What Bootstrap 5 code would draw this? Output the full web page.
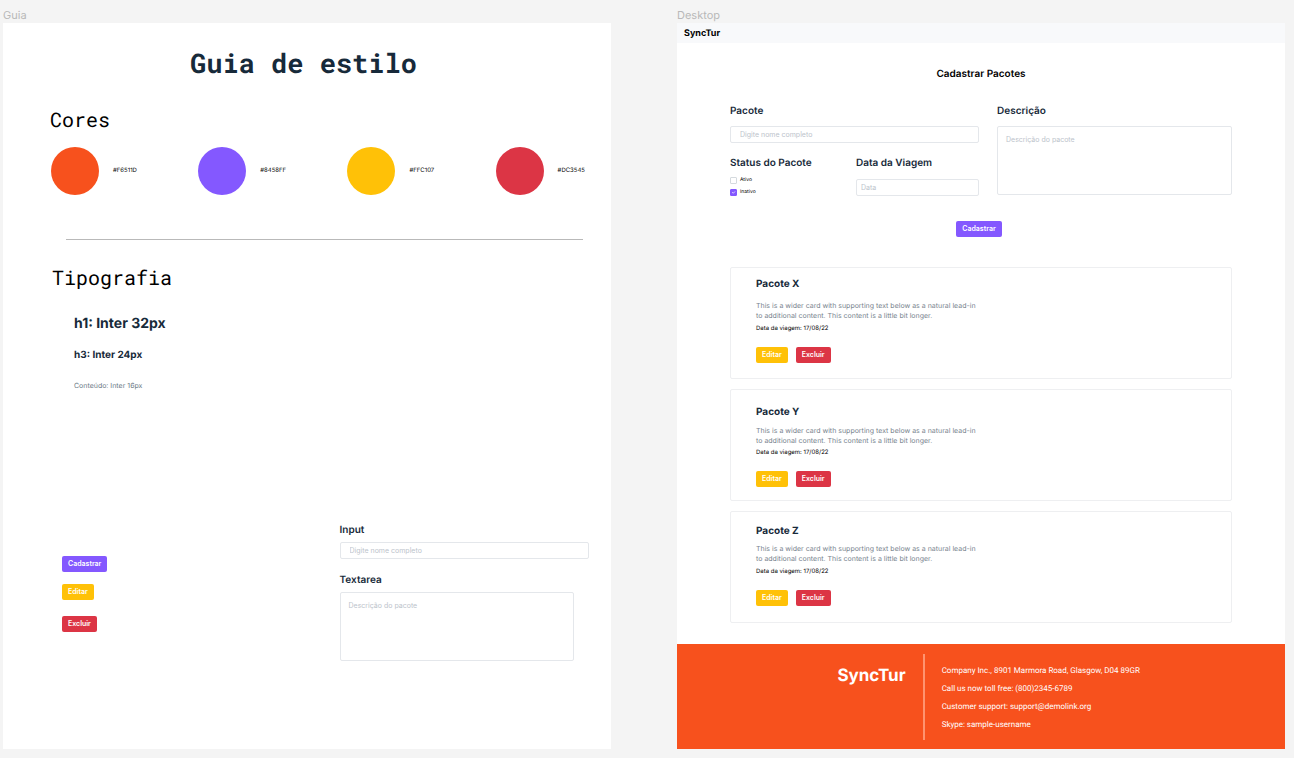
<!DOCTYPE html>
<html lang="pt-BR">
<head>
<meta charset="utf-8">
<meta name="viewport" content="width=device-width, initial-scale=1">
<title>SyncTur</title>
<link href="https://cdn.jsdelivr.net/npm/bootstrap@5.3.0/dist/css/bootstrap.min.css" rel="stylesheet">
<style>
  :root { --ink: #172a3a; --orange: #f7511d; --purple: #8458ff; --yellow: #ffc107; --red: #dc3545; --line: #e4e7eb; }
  body { background: #f4f4f4; font-family: Inter, "Liberation Sans", sans-serif; font-size: 7px; line-height: 10px; color: #000; text-rendering: geometricPrecision; }
  h1, h2, h3, p, label, legend { margin: 0; }
  .board { padding: 8px 9px 10px 3px; gap: 66px; }
  .frame-col { flex: 1 1 0; min-width: 0; }
  .frame-name { font-size: 11px; line-height: 15px; color: #b8b8b8; }
  .frame { background: #fff; flex: 1 1 auto; }

  .mono { font-family: "Roboto Mono", "DejaVu Sans Mono", monospace; }
  .guide-title { font-size: 27px; line-height: 36px; font-weight: 700; color: var(--ink); padding: 23px 7px 0 0; }
  .section-title { font-size: 20px; line-height: 28px; font-weight: 400; margin-left: 47px; }
  .swatches { margin: 13px 26px 0 48px; }
  .swatch { gap: 14px; font-size: 6px; line-height: 8px; }
  .dot { width: 48px; height: 48px; border-radius: 50%; }
  .rule { margin: 44px 28px 24px 63px; border-top: 1px solid #b9b9b9; opacity: 1; }
  .rule + .section-title { margin-left: 49px; }
  .type-list { margin: 22px 0 0 71px; color: var(--ink); font-weight: 700; }
  .type-h1 { font-size: 14px; line-height: 20px; font-weight: 700; }
  .type-h3 { font-size: 10px; line-height: 14px; font-weight: 700; margin-top: 14px; }
  .type-body { font-weight: 400; color: #6c7a86; margin-top: 19px; }
  .samples { display: grid; grid-template-columns: 277fr 249fr; margin: 132px 22px 80px 59px; }
  .sample-btns { padding-top: 33px; gap: 12px; }
  .sample-area { width: 94%; }

  .btn-mini { --bs-btn-font-size: 7px; --bs-btn-font-weight: 600; --bs-btn-line-height: 14px; --bs-btn-padding-y: 1px;
    --bs-btn-padding-x: 6px; --bs-btn-border-width: 0; --bs-btn-border-radius: 2px; --bs-btn-color: #fff; --bs-btn-hover-color: #fff; }
  .btn-add { --bs-btn-bg: var(--purple); --bs-btn-hover-bg: #7144ee; }
  .btn-edit { --bs-btn-bg: var(--yellow); --bs-btn-hover-bg: #e9af00; }
  .btn-del { --bs-btn-bg: var(--red); --bs-btn-hover-bg: #c22a39; }

  .field-label { display: block; font-size: 10px; line-height: 14px; font-weight: 600; color: var(--ink); float: none; }
  .field { display: block; font-size: 7px; line-height: 10px; min-height: 0; height: 17px; padding: 2px 9px; border: 1px solid var(--line); border-radius: 2px; }
  .field::placeholder { color: #bcc3cb; }
  textarea.field { height: 69px; min-height: 0; padding: 8px; resize: none; }
  .field-date { padding: 2px 4px; }
  .g-label { margin-bottom: 5px; }
  .field + .g-label { margin-top: 14px; }

  .topbar { background: #f8f9fb; padding: 0 7px; min-height: 20px; }
  .topbar .navbar-brand { font-size: 9px; line-height: 18px; font-weight: 700; color: #000; padding: 2px 0 0; margin: 0; }
  .page-title { font-size: 10px; line-height: 14px; font-weight: 600; margin-top: 24px; }
  .page-body { padding: 0 53px; }
  .pack-form { display: grid; grid-template-columns: 249fr 235fr; column-gap: 18px; margin-top: 23px; }
  .pack-form .wide-label { margin-bottom: 8px; }
  .half { display: grid; grid-template-columns: 127fr 124fr; margin-top: 13px; }
  .half .field-label { margin-bottom: 9px; }
  .half legend.field-label { margin-bottom: 6px; }
  .tick { gap: 3px; font-size: 5px; line-height: 8px; margin-bottom: 4px; min-height: 8px; }
  .tick .form-check-input { width: 7px; height: 7px; margin: 0; border: 1px solid #d5dade; border-radius: 1px; }
  .tick .form-check-input:checked { background-color: var(--purple); border-color: var(--purple); }
  .submit-row { margin: 21px 4px 30px 0; }

  .pack-list { gap: 10px; }
  .pack { --bs-card-border-color: #eeeff1; --bs-card-border-radius: 2px; --top: 8px; --lead: 9px; --date: 4px;
    padding: var(--top) 25px 8px; min-height: 112px; }
  .pack-y { --top: 14px; --lead: 6px; --date: 3px; }
  .pack-z { --top: 11px; --lead: 5px; }
  .pack-name { font-size: 10px; line-height: 16px; font-weight: 700; color: var(--ink); margin-bottom: var(--lead); }
  .pack-text { color: #78838e; max-width: 230px; }
  .pack-date { font-size: 6px; line-height: 8px; margin: var(--date) 0 14px; }
  .pack-actions { gap: 8px; }

  .site-foot { background: var(--orange); color: #fff; margin-top: 21px; padding: 10px 0 9px; }
  .foot-brand { width: 40.4%; padding: 11px 17px 0 0; font-size: 17px; line-height: 22px; font-weight: 700; }
  .foot-info { border-left: 2px solid #ff936f; padding: 8px 0 6px 17px; font-family: Roboto, sans-serif; font-size: 8px; line-height: 18px; }
</style>
</head>
<body>
<div class="board d-flex min-vh-100">
  <section class="frame-col d-flex flex-column">
    <div class="frame-name">Guia</div>
    <div class="frame">
      <h1 class="guide-title mono text-center">Guia de estilo</h1>
      <h2 class="section-title mono mt-4">Cores</h2>
      <div class="swatches d-flex justify-content-between">
        <div class="swatch d-flex align-items-center"><span class="dot" style="background:#f7511d"></span>#F6511D</div>
        <div class="swatch d-flex align-items-center"><span class="dot" style="background:#8458ff"></span>#8458FF</div>
        <div class="swatch d-flex align-items-center"><span class="dot" style="background:#ffc107"></span>#FFC107</div>
        <div class="swatch d-flex align-items-center"><span class="dot" style="background:#dc3545"></span>#DC3545</div>
      </div>
      <hr class="rule">
      <h2 class="section-title mono">Tipografia</h2>
      <div class="type-list">
        <h1 class="type-h1">h1: Inter 32px</h1>
        <h3 class="type-h3">h3: Inter 24px</h3>
        <p class="type-body">Conteúdo: Inter 16px</p>
      </div>
      <div class="samples">
        <div class="sample-btns d-flex flex-column align-items-start">
          <button type="button" class="btn btn-mini btn-add">Cadastrar</button>
          <button type="button" class="btn btn-mini btn-edit">Editar</button>
          <button type="button" class="btn btn-mini btn-del mt-1">Excluir</button>
        </div>
        <div>
          <label class="field-label g-label" for="s-input">Input</label>
          <input class="form-control field" id="s-input" type="text" placeholder="Digite nome completo">
          <label class="field-label g-label" for="s-area">Textarea</label>
          <textarea class="form-control field sample-area" id="s-area" placeholder="Descrição do pacote"></textarea>
        </div>
      </div>
    </div>
  </section>

  <section class="frame-col d-flex flex-column">
    <div class="frame-name">Desktop</div>
    <div class="frame d-flex flex-column">
      <nav class="navbar topbar"><a class="navbar-brand" href="#">SyncTur</a></nav>
      <main class="page-body">
        <h1 class="page-title text-center">Cadastrar Pacotes</h1>
        <form>
          <div class="pack-form">
            <div>
              <label class="field-label wide-label" for="p-name">Pacote</label>
              <input class="form-control field" id="p-name" type="text" placeholder="Digite nome completo">
              <div class="half">
                <fieldset>
                  <legend class="field-label">Status do Pacote</legend>
                  <div class="tick d-flex align-items-center"><input class="form-check-input" type="checkbox" id="c-on"><label for="c-on">Ativo</label></div>
                  <div class="tick d-flex align-items-center"><input class="form-check-input" type="checkbox" id="c-off" checked><label for="c-off">Inativo</label></div>
                </fieldset>
                <div>
                  <label class="field-label" for="p-date">Data da Viagem</label>
                  <input class="form-control field field-date" id="p-date" type="text" placeholder="Data">
                </div>
              </div>
            </div>
            <div>
              <label class="field-label wide-label" for="p-desc">Descrição</label>
              <textarea class="form-control field" id="p-desc" placeholder="Descrição do pacote"></textarea>
            </div>
          </div>
          <div class="submit-row d-flex justify-content-center"><button type="button" class="btn btn-mini btn-add">Cadastrar</button></div>
        </form>
        <div class="pack-list d-flex flex-column">
          <article class="card pack">
            <h2 class="pack-name">Pacote X</h2>
            <p class="pack-text">This is a wider card with supporting text below as a natural lead-in<br>to additional content. This content is a little bit longer.</p>
            <p class="pack-date">Data da viagem: 17/08/22</p>
            <div class="pack-actions d-flex"><button type="button" class="btn btn-mini btn-edit">Editar</button><button type="button" class="btn btn-mini btn-del">Excluir</button></div>
          </article>
          <article class="card pack pack-y">
            <h2 class="pack-name">Pacote Y</h2>
            <p class="pack-text">This is a wider card with supporting text below as a natural lead-in<br>to additional content. This content is a little bit longer.</p>
            <p class="pack-date">Data da viagem: 17/08/22</p>
            <div class="pack-actions d-flex"><button type="button" class="btn btn-mini btn-edit">Editar</button><button type="button" class="btn btn-mini btn-del">Excluir</button></div>
          </article>
          <article class="card pack pack-z">
            <h2 class="pack-name">Pacote Z</h2>
            <p class="pack-text">This is a wider card with supporting text below as a natural lead-in<br>to additional content. This content is a little bit longer.</p>
            <p class="pack-date">Data da viagem: 17/08/22</p>
            <div class="pack-actions d-flex"><button type="button" class="btn btn-mini btn-edit">Editar</button><button type="button" class="btn btn-mini btn-del">Excluir</button></div>
          </article>
        </div>
      </main>
      <footer class="site-foot d-flex">
        <div class="foot-brand text-end">SyncTur</div>
        <div class="foot-info">
          <div>Company Inc., 8901 Marmora Road, Glasgow, D04 89GR</div>
          <div>Call us now toll free: (800)2345-6789</div>
          <div>Customer support: support@demolink.org</div>
          <div>Skype: sample-username</div>
        </div>
      </footer>
    </div>
  </section>
</div>
<script src="https://cdn.jsdelivr.net/npm/bootstrap@5.3.0/dist/js/bootstrap.bundle.min.js"></script>
</body>
</html>
